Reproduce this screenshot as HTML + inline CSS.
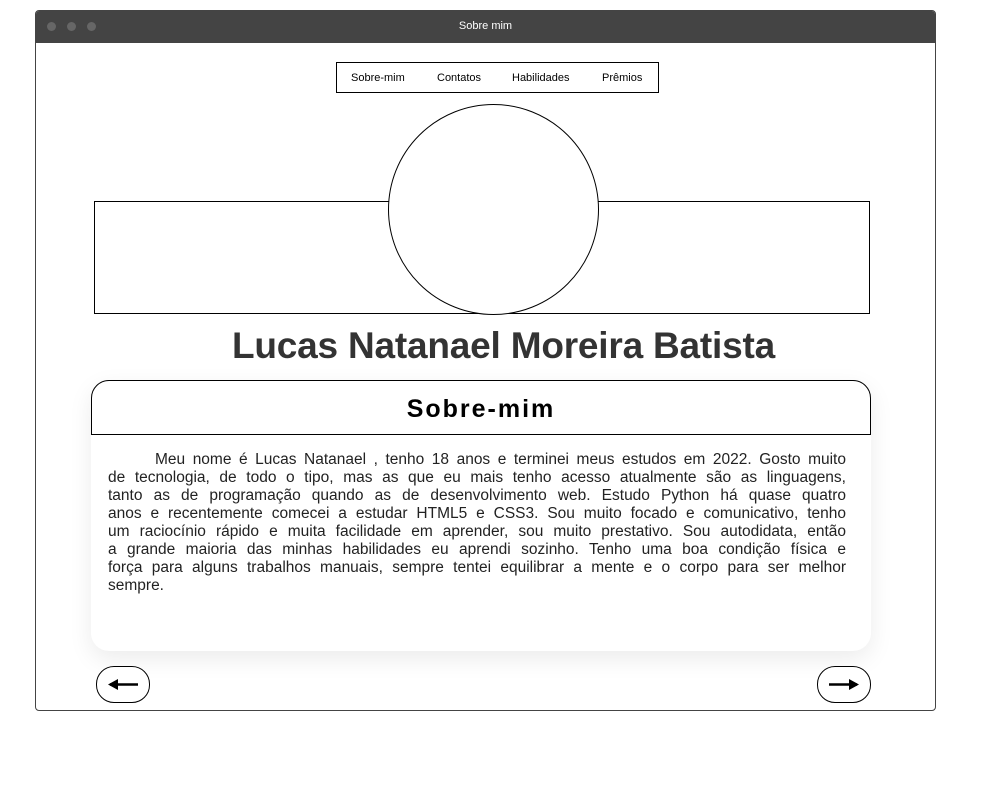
<!DOCTYPE html>
<html><head><meta charset="utf-8"><style>
*{margin:0;padding:0;box-sizing:border-box}
body{width:1000px;height:810px;background:#fff;font-family:"Liberation Sans",sans-serif;position:relative;overflow:hidden}
.win{position:absolute;left:35px;top:10px;width:901px;height:701px;border:1px solid #444;border-radius:4px;overflow:hidden;background:#fff}
.bar{position:absolute;left:0;top:0;width:100%;height:32px;background:#444;color:#fff;font-size:11px;text-align:center;line-height:31px}
.dot{position:absolute;top:11px;width:9px;height:9px;border-radius:50%;background:#666}
.a{position:absolute}
.nav{left:300px;top:51px;width:323px;height:31px;border:1px solid #000;font-size:11px;color:#000}
.nav span{position:absolute;top:9px}
.circle{left:352px;top:93px;width:211px;height:211px;border:1px solid #000;border-radius:50%;background:#fff}
.rect{left:58px;top:190px;width:776px;height:113px;border:1px solid #000}
.title{left:0;width:935px;top:314px;text-align:center;font-weight:bold;font-size:37px;color:#333;letter-spacing:-0.2px}
.card{left:55px;top:369px;width:780px;height:271px;border-radius:18px;background:#fff;box-shadow:0 8px 24px rgba(0,0,0,.08)}
.head{position:absolute;left:0;top:0;width:780px;height:55px;border:1px solid #000;border-radius:18px 18px 0 0;text-align:center;font-weight:bold;font-size:25px;letter-spacing:2px;line-height:56px;color:#000}
.txt{position:absolute;left:17px;top:71px;width:738px;font-size:15.5px;line-height:18px;color:#222}
.txt div{text-align:justify;text-align-last:justify;white-space:nowrap;overflow:visible}
.txt div.l{text-align-last:left}
.btn{top:655px;width:54px;height:37px;border:1px solid #000;border-radius:18px/18px;background:#fff}
</style></head><body>
<div class="win">
<div class="bar">Sobre mim<span class="dot" style="left:11px"></span><span class="dot" style="left:31px"></span><span class="dot" style="left:51px"></span></div>
<div class="a nav"><span style="left:14px">Sobre-mim</span><span style="left:100px">Contatos</span><span style="left:175px">Habilidades</span><span style="left:265px">Prêmios</span></div>
<div class="a rect"></div>
<div class="a circle"></div>
<div class="a title">Lucas Natanael Moreira Batista</div>
<div class="a card">
<div class="head">Sobre-mim</div>
<div class="txt">
<div style="padding-left:47px">Meu nome é Lucas Natanael , tenho 18 anos e terminei meus estudos em 2022. Gosto muito</div>
<div>de tecnologia, de todo o tipo, mas as que eu mais tenho acesso atualmente são as linguagens,</div>
<div>tanto as de programação quando as de desenvolvimento web. Estudo Python há quase quatro</div>
<div>anos e recentemente comecei a estudar HTML5 e CSS3. Sou muito focado e comunicativo, tenho</div>
<div>um raciocínio rápido e muita facilidade em aprender, sou muito prestativo. Sou autodidata, então</div>
<div>a grande maioria das minhas habilidades eu aprendi sozinho. Tenho uma boa condição física e</div>
<div>força para alguns trabalhos manuais, sempre tentei equilibrar a mente e o corpo para ser melhor</div>
<div class="l">sempre.</div>
</div>
</div>
<div class="a btn" style="left:60px"><svg width="54" height="37" style="position:absolute;left:-1px;top:-1px"><path d="M14 18.5H42" stroke="#000" stroke-width="2.5"/><path d="M12 18.5L22 13V24Z" fill="#000"/></svg></div>
<div class="a btn" style="left:781px"><svg width="54" height="37" style="position:absolute;left:-1px;top:-1px"><path d="M12 18.5H40" stroke="#000" stroke-width="2.5"/><path d="M42 18.5L32 13V24Z" fill="#000"/></svg></div>
</div>
</body></html>
